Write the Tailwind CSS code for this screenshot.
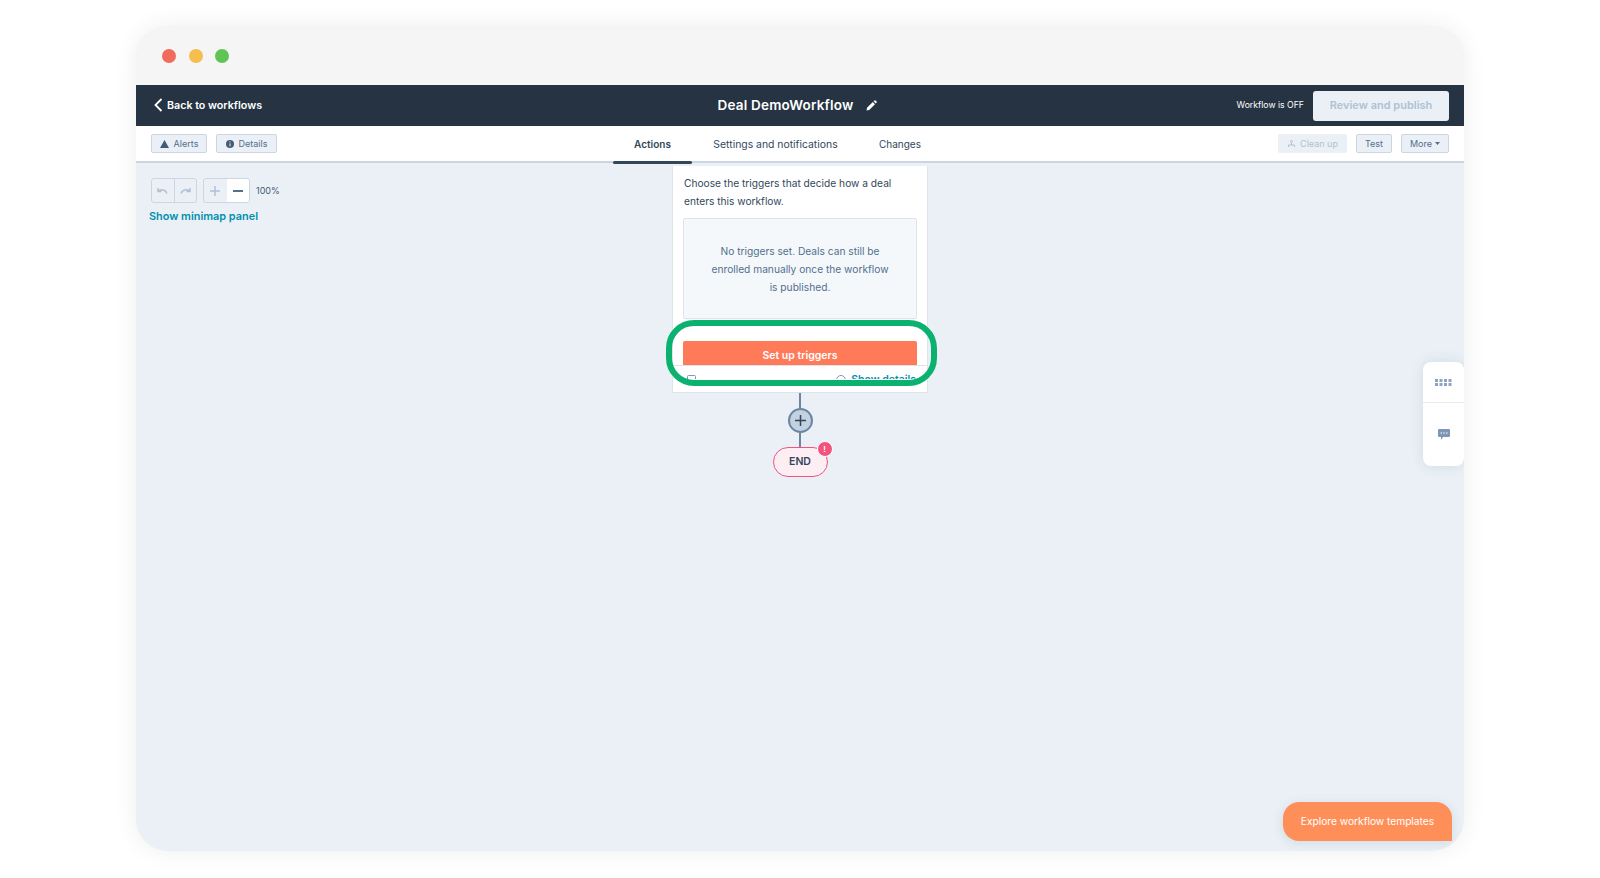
<!DOCTYPE html>
<html lang="en">
<head>
    <meta charset="UTF-8">
    <title>Deal DemoWorkflow</title>
    <script src="https://cdn.jsdelivr.net/npm/@tailwindcss/browser@4"></script>
</head>
<body class="bg-white font-[Inter,sans-serif] text-[#33475b] overflow-hidden">
<div class="h-[878px] pt-[26px] pl-[136px]">
    <div class="relative w-[1328px] h-[825px] rounded-[32px] overflow-hidden flex flex-col bg-[#eaf0f6] shadow-[0_0_24px_rgba(0,0,0,0.07)]">

        <!-- window chrome -->
        <div class="h-[59px] shrink-0 bg-[#f5f5f5] flex items-center gap-[12.5px] pl-[26px] pt-[1px]">
            <span class="w-[14px] h-[14px] rounded-full bg-[#f16a5e]"></span>
            <span class="w-[14px] h-[14px] rounded-full bg-[#f6bd4f]"></span>
            <span class="w-[14px] h-[14px] rounded-full bg-[#5fc454]"></span>
        </div>

        <!-- top bar -->
        <div class="h-[41px] shrink-0 bg-[#253342] grid grid-cols-3 items-center text-white">
            <div class="flex items-center pl-[18px] gap-[4px]">
                <svg width="9" height="14" viewBox="0 0 9 14" fill="none" stroke="white" stroke-width="1.8"><path d="M7.5 1 1.5 7l6 6"/></svg>
                <span class="text-[10.7px] font-semibold pt-[1px]">Back to workflows</span>
            </div>
            <div class="flex items-center justify-center gap-[12px] pr-[6px]">
                <span class="text-[13.5px] font-semibold tracking-[0.2px]">Deal DemoWorkflow</span>
                <svg width="11" height="11" viewBox="0 0 11 11" fill="white"><path d="M0.5 10.5 1 7.8 6.8 2l2.2 2.2L3.2 10zM7.6 1.2 8.5.4a.7.7 0 0 1 1 0l1.1 1.1a.7.7 0 0 1 0 1L9.8 3.4z"/></svg>
            </div>
            <div class="flex items-center justify-end pr-[15px] gap-[9px]">
                <span class="text-[8.7px]">Workflow is OFF</span>
                <span class="w-[136px] h-[30px] rounded-[3px] bg-[#eaf0f6] text-[#b0c1d4] text-[11px] font-semibold flex items-center justify-center">Review and publish</span>
            </div>
        </div>

        <!-- tabs row -->
        <div class="h-[37px] shrink-0 bg-white border-b-2 border-[#cbd6e2] flex items-center justify-between pl-[15px] pr-[15px] relative">
            <div class="flex items-center gap-[9px] text-[9px] text-[#516f90]">
                <span class="h-[19px] w-[56px] rounded-[2px] border border-[#cbd6e2] bg-[#eaf0f6] flex items-center justify-center gap-[5px]">
                    <svg width="9" height="8" viewBox="0 0 9 8" fill="#425b76"><path d="M4.500 0 9 8H0z"/></svg>Alerts
                </span>
                <span class="h-[19px] w-[61px] rounded-[2px] border border-[#cbd6e2] bg-[#eaf0f6] flex items-center justify-center gap-[5px]">
                    <svg width="8" height="8" viewBox="0 0 8 8"><circle cx="4" cy="4" r="4" fill="#425b76"/><path d="M4 3.400v3M4 1.400v1" stroke="#eaf0f6"/></svg>Details
                </span>
            </div>
            <div class="absolute left-[477px] top-0 h-[36px] flex text-[10.4px]">
                <span class="relative w-[79px] flex items-center justify-center font-semibold text-[10px]">Actions
                    <span class="absolute left-0 right-0 bottom-[-2px] h-[3px] rounded-[2px] bg-[#33475b]"></span>
                </span>
                <span class="ml-[21px] w-[125px] flex items-center justify-center whitespace-nowrap pt-[1px]">Settings and notifications</span>
                <span class="ml-[41px] w-[42px] flex items-center justify-center text-[10px]">Changes</span>
            </div>
            <div class="flex items-center gap-[9px] text-[9px] text-[#516f90]">
                <span class="h-[19px] w-[69px] rounded-[2px] bg-[#eaf0f6] text-[#b0c1d4] flex items-center justify-center gap-[4px]">
                    <svg width="9" height="8" viewBox="0 0 9 8" fill="none" stroke="#b0c1d4"><path d="M4.500 3v2M1.500 7V5h6v2"/><circle cx="4.500" cy="1.500" r="1"/></svg>Clean up
                </span>
                <span class="h-[19px] w-[36px] rounded-[2px] border border-[#cbd6e2] bg-[#eaf0f6] flex items-center justify-center">Test</span>
                <span class="h-[19px] w-[48px] rounded-[2px] border border-[#cbd6e2] bg-[#eaf0f6] flex items-center justify-center gap-[3px]">More
                    <svg width="5" height="3" viewBox="0 0 5 3" fill="#516f90"><path d="M0 0h5L2.500 3z"/></svg>
                </span>
            </div>
        </div>

        <!-- canvas -->
        <div class="relative flex-1 flex flex-col items-center">
            <!-- zoom controls -->
            <div class="absolute left-[15px] top-[15px]">
                <div class="flex items-center">
                    <div class="flex h-[25px] w-[46px] rounded-[3px] border border-[#cbd6e2] divide-x divide-[#cbd6e2]">
                        <span class="flex-1 flex items-center justify-center">
                            <svg width="11" height="8" viewBox="0 0 11 8" fill="none" stroke="#b0c1d4" stroke-width="1.500"><path d="M1 1v3.500h3.500M1 4.500C3 2 8 1.500 10 6.500"/></svg>
                        </span>
                        <span class="flex-1 flex items-center justify-center">
                            <svg width="11" height="8" viewBox="0 0 11 8" fill="none" stroke="#b0c1d4" stroke-width="1.500"><path d="M10 1v3.500H6.500M10 4.500C8 2 3 1.500 1 6.500"/></svg>
                        </span>
                    </div>
                    <div class="flex h-[25px] w-[47px] ml-[6px] rounded-[3px] border border-[#cbd6e2] overflow-hidden">
                        <span class="flex-1 flex items-center justify-center">
                            <svg width="10" height="10" viewBox="0 0 10 10" stroke="#b0c1d4" stroke-width="1.500"><path d="M5 0v10M0 5h10"/></svg>
                        </span>
                        <span class="flex-1 bg-white flex items-center justify-center">
                            <svg width="10" height="2" viewBox="0 0 10 2" stroke="#516f90" stroke-width="2"><path d="M0 1h10"/></svg>
                        </span>
                    </div>
                    <span class="ml-[6px] text-[9px] text-[#425b76]">100%</span>
                </div>
                <div class="mt-[5px] -ml-[2px] text-[10.9px] font-semibold text-[#0091ae]">Show minimap panel</div>
            </div>

            <!-- trigger card -->
            <div class="w-[256px] h-[227px] mt-[3px] bg-white border border-[#dfe3eb] border-t-0 pt-[8px] flex flex-col relative">
                <p class="px-[11px] text-[10.2px] leading-[18px]">Choose the triggers that decide how a deal enters this workflow.</p>
                <div class="mx-[10px] mt-[8px] h-[101px] rounded-[2px] border border-[#dfe3eb] bg-[#f5f8fa] pt-[23px] px-[26px] text-center text-[10.2px] leading-[18px] text-[#516f90]">
                    No triggers set. Deals can still be enrolled manually once the workflow is published.
                </div>
                <div class="mx-[10px] mt-[22px] h-[24px] rounded-t-[2px] bg-[#ff7a59] text-white text-[10.5px] font-semibold flex items-center justify-center pt-[6px]">Set up triggers</div>
                <div class="h-[14px] border-t border-[#dfe3eb] overflow-hidden flex justify-between px-[14px] pr-[11px] text-[10.5px] font-semibold text-[#0091ae]">
                    <svg class="mt-[8px]" width="9" height="11" viewBox="0 0 9 11" fill="none" stroke="#7c98b6"><rect x="0.500" y="1.500" width="8" height="9" rx="1"/></svg>
                    <span class="flex items-start gap-[5px] pt-[6px]">
                        <svg class="mt-[3px]" width="10" height="10" viewBox="0 0 10 10" fill="none" stroke="#7c98b6"><circle cx="5" cy="5" r="4.500"/></svg>Show details
                    </span>
                </div>
            </div>

            <!-- connector -->
            <div class="w-[2px] h-[15px] bg-[#6a86a4]"></div>
            <div class="w-[25px] h-[25px] rounded-full bg-[#c3d1e0] border-2 border-[#6a86a4] flex items-center justify-center">
                <svg width="11" height="11" viewBox="0 0 11 11" stroke="#33475b" stroke-width="1.500"><path d="M5.500 0v11M0 5.500h11"/></svg>
            </div>
            <div class="w-[2px] h-[14px] bg-[#6a86a4]"></div>
            <div class="relative w-[55px] h-[30px] rounded-[15px] border border-[#f2547d] bg-[#fceef3] flex items-center justify-center text-[10.5px] font-semibold">END
                <span class="absolute right-[-6px] top-[-7px] w-[16px] h-[16px] rounded-full bg-[#f2547d] border border-white text-white text-[8px] flex items-center justify-center">!</span>
            </div>

            <!-- highlight ring -->
            <div class="absolute left-[530px] top-[157px] w-[271px] h-[66px] rounded-[28px] border-[6px] border-[#0bb26f]"></div>

            <!-- right rail -->
            <div class="absolute right-0 top-[199px] w-[41px] h-[104px] rounded-[8px] bg-white shadow-[0_0_14px_rgba(45,62,80,0.12)] flex flex-col">
                <div class="h-[41px] flex items-center justify-center border-b border-[#e5ecf3]">
                    <svg width="17" height="7" viewBox="0 0 17 7" fill="#8ba4bf"><path d="M0 0h3v3H0zM4.500 0h3v3h-3zM9 0h3v3H9zM13.500 0h3v3h-3zM0 4h3v3H0zM4.500 4h3v3h-3zM9 4h3v3H9zM13.500 4h3v3h-3z"/></svg>
                </div>
                <div class="flex-1 flex items-center justify-center">
                    <svg width="12" height="11" viewBox="0 0 12 11"><path fill="#7c98b6" d="M1 0h10a1 1 0 0 1 1 1v6a1 1 0 0 1-1 1H5l-2 3V8H1a1 1 0 0 1-1-1V1a1 1 0 0 1 1-1z"/><path stroke="#fff" stroke-width="1.200" d="M2.500 4h1.500M5.200 4h1.500M8 4h1.500"/></svg>
                </div>
            </div>

            <!-- templates button -->
            <div class="absolute right-[12px] bottom-[10px] w-[169px] h-[39px] rounded-t-[16px] rounded-bl-[16px] bg-[#ff8f59] text-white text-[10.2px] flex items-center justify-center shadow-[0_2px_12px_rgba(45,62,80,0.12)]">Explore workflow templates</div>
        </div>
    </div>
</div>
</body>
</html>
